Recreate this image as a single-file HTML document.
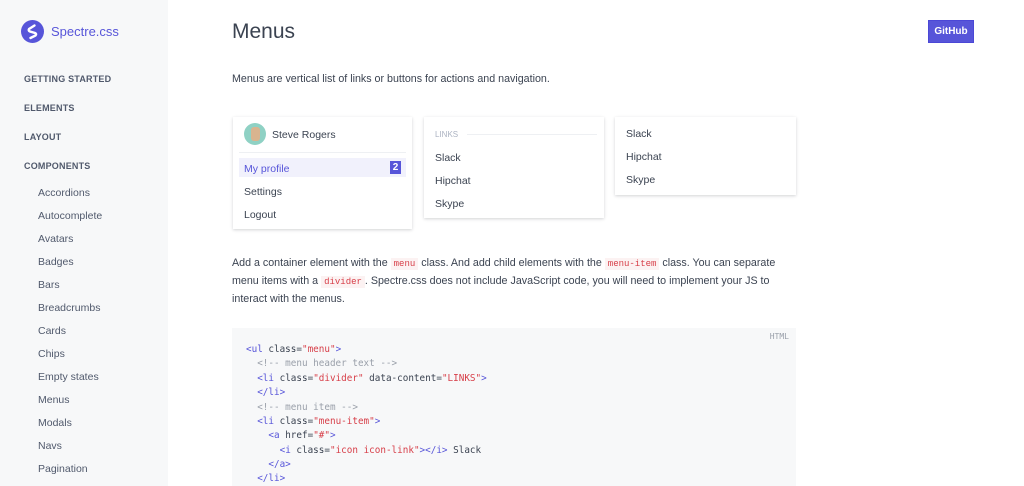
<!DOCTYPE html>
<html><head><meta charset="utf-8"><style>
*{margin:0;padding:0;box-sizing:border-box}
body{width:1024px;height:486px;overflow:hidden;background:#fff;font-family:"Liberation Sans",sans-serif;color:#3b4351;position:relative}
.side{position:absolute;left:0;top:0;width:168px;height:486px;background:#f7f8f9}
.logo{position:absolute;left:21px;top:20px;width:23px;height:23px;border-radius:50%;background:#5755d9}
.brand{position:absolute;left:51px;top:24px;font-size:13px;color:#5755d9}
.sec{position:absolute;left:24px;font-size:9px;font-weight:bold;color:#50596c;letter-spacing:.2px}
.sub{position:absolute;left:38px;font-size:10.5px;color:#50596c}
.a{position:absolute}
h1{position:absolute;left:232px;top:20px;font-size:21px;font-weight:normal;color:#3b4351}
.gh{position:absolute;left:928px;top:20px;width:46px;height:23px;background:#5755d9;border:1px solid #4b48d6;color:#fff;font-size:10px;font-weight:bold;text-align:center;line-height:21px}
.p{position:absolute;left:232px;font-size:10.7px;color:#3b4351;line-height:17px}
.menu{position:absolute;background:#fff;box-shadow:0 1px 3px rgba(48,55,66,.22)}
.mi{position:absolute;font-size:10.5px;color:#3b4351}
code.c{font-family:"Liberation Mono",monospace;font-size:9px;background:#fcf2f2;padding:1px 3px;color:#d73e48}
.pre{position:absolute;left:232px;top:328px;width:564px;height:158px;background:#f7f8f9}
.ln{position:absolute;left:246px;font-family:"DejaVu Sans Mono",monospace;font-size:9.3px;color:#3b4351;white-space:pre}
.t{color:#5755d9}.s{color:#d73e48}.cm{color:#9aa0aa}
</style></head><body>
<div class="side">
<div class="logo"><svg width="23" height="23" viewBox="0 0 23 23"><path d="M13.5 5.5 L8 9 Q7 10.5 9 11.5 L14 13 Q16 14 14.5 15.5 L9.5 18" stroke="#fff" stroke-width="2.4" fill="none" stroke-linecap="round"/></svg></div>
<div class="brand">Spectre.css</div>
<div class="sec" style="top:74px">GETTING STARTED</div>
<div class="sec" style="top:103px">ELEMENTS</div>
<div class="sec" style="top:132px">LAYOUT</div>
<div class="sec" style="top:161px">COMPONENTS</div>
<div class="sub" style="top:187px">Accordions</div>
<div class="sub" style="top:210px">Autocomplete</div>
<div class="sub" style="top:233px">Avatars</div>
<div class="sub" style="top:256px">Badges</div>
<div class="sub" style="top:279px">Bars</div>
<div class="sub" style="top:302px">Breadcrumbs</div>
<div class="sub" style="top:325px">Cards</div>
<div class="sub" style="top:348px">Chips</div>
<div class="sub" style="top:371px">Empty states</div>
<div class="sub" style="top:394px">Menus</div>
<div class="sub" style="top:417px">Modals</div>
<div class="sub" style="top:440px">Navs</div>
<div class="sub" style="top:463px">Pagination</div>
</div>
<h1>Menus</h1>
<div class="gh">GitHub</div>
<div class="p" style="top:71px">Menus are vertical list of links or buttons for actions and navigation.</div>

<div class="menu" style="left:233px;top:117px;width:179px;height:112px">
<div class="a" style="left:11px;top:6px;width:22px;height:22px;border-radius:50%;background:#8fd1c4"><div style="position:absolute;left:7px;top:4px;width:9px;height:14px;background:#d9b48f;border-radius:3px"></div></div>
<div class="mi" style="left:39px;top:12px">Steve Rogers</div>
<div class="a" style="left:6px;top:35px;width:167px;height:1px;background:#eef0f3"></div>
<div class="a" style="left:6px;top:41px;width:167px;height:19px;background:#f1f1fc"></div>
<div class="mi" style="left:11px;top:46px;color:#5755d9">My profile</div>
<div class="a" style="left:157px;top:44px;width:11px;height:13px;background:#5755d9;color:#fff;font-size:10px;font-weight:bold;text-align:center;line-height:13px">2</div>
<div class="mi" style="left:11px;top:69px">Settings</div>
<div class="mi" style="left:11px;top:92px">Logout</div>
</div>

<div class="menu" style="left:424px;top:117px;width:180px;height:101px">
<div class="mi" style="left:11px;top:13px;font-size:8px;color:#acb3c2">LINKS</div>
<div class="a" style="left:43px;top:17px;width:130px;height:1px;background:#eef0f3"></div>
<div class="mi" style="left:11px;top:35px">Slack</div>
<div class="mi" style="left:11px;top:58px">Hipchat</div>
<div class="mi" style="left:11px;top:81px">Skype</div>
</div>

<div class="menu" style="left:615px;top:117px;width:181px;height:78px">
<div class="mi" style="left:11px;top:11px">Slack</div>
<div class="mi" style="left:11px;top:34px">Hipchat</div>
<div class="mi" style="left:11px;top:57px">Skype</div>
</div>

<div class="p" style="top:255px;width:565px">Add a container element with the <code class="c">menu</code> class. And add child elements with the <code class="c">menu-item</code> class. You can separate menu items with a <code class="c">divider</code>. Spectre.css does not include JavaScript code, you will need to implement your JS to interact with the menus.</div>

<div class="pre"><div style="position:absolute;right:7px;top:4px;font-family:'DejaVu Sans Mono',monospace;font-size:8px;color:#9aa0aa">HTML</div></div>
<div class="ln" style="top:344px"><span class="t">&lt;ul</span> class=<span class="s">"menu"</span><span class="t">&gt;</span></div>
<div class="ln cm" style="top:358px">  &lt;!-- menu header text --&gt;</div>
<div class="ln" style="top:373px">  <span class="t">&lt;li</span> class=<span class="s">"divider"</span> data-content=<span class="s">"LINKS"</span><span class="t">&gt;</span></div>
<div class="ln" style="top:387px">  <span class="t">&lt;/li&gt;</span></div>
<div class="ln cm" style="top:402px">  &lt;!-- menu item --&gt;</div>
<div class="ln" style="top:416px">  <span class="t">&lt;li</span> class=<span class="s">"menu-item"</span><span class="t">&gt;</span></div>
<div class="ln" style="top:430px">    <span class="t">&lt;a</span> href=<span class="s">"#"</span><span class="t">&gt;</span></div>
<div class="ln" style="top:445px">      <span class="t">&lt;i</span> class=<span class="s">"icon icon-link"</span><span class="t">&gt;&lt;/i&gt;</span> Slack</div>
<div class="ln" style="top:459px">    <span class="t">&lt;/a&gt;</span></div>
<div class="ln" style="top:473px">  <span class="t">&lt;/li&gt;</span></div>
</body></html>
